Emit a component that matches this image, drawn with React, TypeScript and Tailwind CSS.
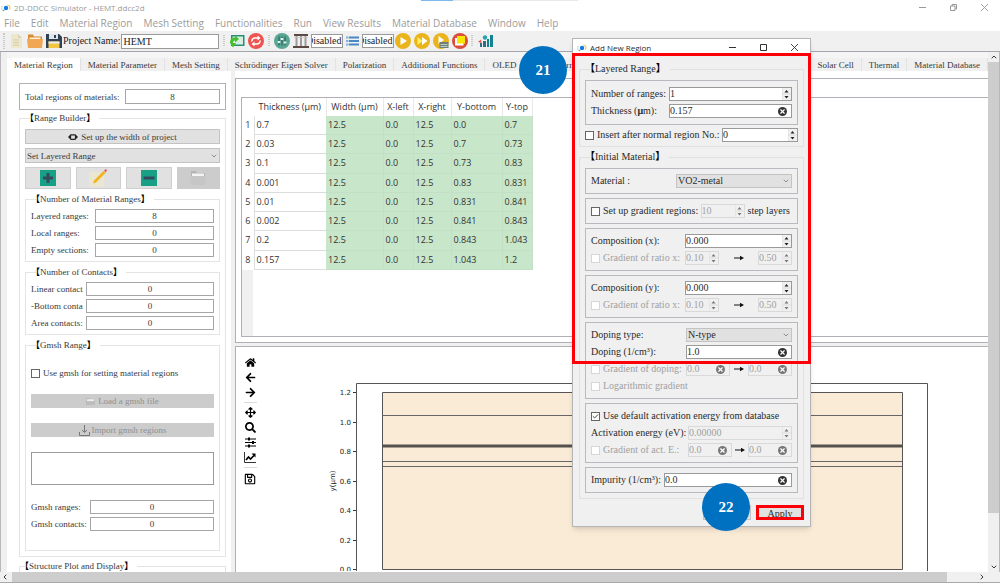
import { useState, type ReactNode } from "react";
import { ChevronDown, ChevronUp, ChevronLeft, ChevronRight, Check, X } from "lucide-react";
import { FaHome, FaArrowLeft, FaArrowRight, FaArrowsAlt, FaSearch, FaRegSave } from "react-icons/fa";

const MENUS = ["File", "Edit", "Material Region", "Mesh Setting", "Functionalities", "Run", "View Results", "Material Database", "Window", "Help"];
const TABS = ["Material Region", "Material Parameter", "Mesh Setting", "Schrödinger Eigen Solver", "Polarization", "Additional Functions", "OLED"];
const RIGHT_TABS = ["Solar Cell", "Thermal", "Material Database"];

const COLUMNS = ["Thickness (μm)", "Width (μm)", "X-left", "X-right", "Y-bottom", "Y-top"];
const ROWS = [
  ["0.7", "12.5", "0.0", "12.5", "0.0", "0.7"],
  ["0.03", "12.5", "0.0", "12.5", "0.7", "0.73"],
  ["0.1", "12.5", "0.0", "12.5", "0.73", "0.83"],
  ["0.001", "12.5", "0.0", "12.5", "0.83", "0.831"],
  ["0.01", "12.5", "0.0", "12.5", "0.831", "0.841"],
  ["0.002", "12.5", "0.0", "12.5", "0.841", "0.843"],
  ["0.2", "12.5", "0.0", "12.5", "0.843", "1.043"],
  ["0.157", "12.5", "0.0", "12.5", "1.043", "1.2"],
];

function Logo() {
  return (
    <svg viewBox="0 0 20 16" className="h-2 w-[10px] shrink-0">
      <path d="M3 4C0 8 1 13 6 13" fill="none" stroke="#9fd3ef" strokeWidth="2" />
      <path d="M12 2c5 0 7 4 5 9" fill="none" stroke="#f2c94c" strokeWidth="2.4" />
      <circle cx="10" cy="8" r="4.4" fill="#1479e0" />
      <circle cx="5" cy="13" r="1.6" fill="#8fa34a" />
    </svg>
  );
}

function Legend({ children }: { children: ReactNode }) {
  return (
    <legend className="ml-[5px] h-3 pr-1 leading-3 whitespace-nowrap">
      <b className="-ml-[5px] text-black">【</b>
      {children}
      <b className="text-black">】</b>
    </legend>
  );
}

function Tick({ id, label, checked = false, disabled = false }: { id: string; label: string; checked?: boolean; disabled?: boolean }) {
  const [on, setOn] = useState(checked);
  return (
    <span className={`flex items-center gap-[3px] whitespace-nowrap ${disabled ? "text-[#a0a0a0]" : ""}`}>
      <span className="grid size-[9px] shrink-0 place-items-center">
        <input
          id={id}
          type="checkbox"
          checked={on}
          disabled={disabled}
          onChange={(e) => setOn(e.target.checked)}
          className="col-start-1 row-start-1 size-[9px] appearance-none border border-[#666] bg-white disabled:border-[#d6d6d6]"
        />
        {on && <Check className="pointer-events-none col-start-1 row-start-1 size-[7px] text-[#222]" strokeWidth={3} />}
      </span>
      <label htmlFor={id}>{label}</label>
    </span>
  );
}

function CountRow({ id, label, value, labelClass }: { id: string; label: string; value: string; labelClass: string }) {
  return (
    <div className="flex items-center">
      <label htmlFor={id} className={`shrink-0 overflow-hidden whitespace-nowrap ${labelClass}`}>
        {label}
      </label>
      <input id={id} defaultValue={value} className="h-[14px] w-0 min-w-0 flex-1 border border-[#a6a6a6] bg-white text-center" />
    </div>
  );
}

function Spin({ id, label, value, disabled = false, className }: { id: string; label?: string; value: string; disabled?: boolean; className: string }) {
  return (
    <div className={`flex h-[14px] border ${disabled ? "border-[#d9d9d9] bg-[#f0f0f0] text-[#a0a0a0]" : "border-[#9a9a9a] bg-white"} ${className}`}>
      <input id={id} aria-label={label} defaultValue={value} disabled={disabled} className="w-0 min-w-0 flex-1" />
      <button type="button" aria-label="Step value" disabled={disabled} className="flex w-[9px] flex-col items-center justify-center bg-[#f0f0f0]">
        <svg viewBox="0 0 9 12" className="h-3 w-[9px]">
          <path d="M2.500 4.500L4.500 2l2 2.500zM2.500 8L4.500 10.500l2-2.500z" fill={disabled ? "#777" : "#222"} />
          <path d="M0 6h9M0 0v12" stroke="#dcdcdc" strokeWidth="1" />
        </svg>
      </button>
    </div>
  );
}

function Clearable({ id, label, value, disabled = false, className }: { id: string; label?: string; value: string; disabled?: boolean; className: string }) {
  return (
    <div className={`flex h-[14px] items-center border pr-1 ${disabled ? "border-[#d9d9d9] text-[#a0a0a0]" : "border-[#9a9a9a] bg-white"} ${className}`}>
      <input id={id} aria-label={label} defaultValue={value} disabled={disabled} className="w-0 min-w-0 flex-1" />
      <button
        type="button"
        aria-label="Clear"
        disabled={disabled}
        className="grid size-[9px] shrink-0 place-items-center rounded-full bg-[#333] text-white disabled:bg-[#777]"
      >
        <X className="size-[7px]" strokeWidth={4} />
      </button>
    </div>
  );
}

function Drop({ id, label, value, className }: { id: string; label?: string; value: string; className: string }) {
  return (
    <div className={`grid items-center ${className}`}>
      <select
        id={id}
        aria-label={label}
        className="col-start-1 row-start-1 h-full w-full appearance-none border border-[#c3c3c3] bg-[#e1e1e1] pl-px"
      >
        <option>{value}</option>
      </select>
      <ChevronDown className="pointer-events-none col-start-1 row-start-1 mr-[2px] size-2 justify-self-end text-[#666]" />
    </div>
  );
}

function Box({ children }: { children: ReactNode }) {
  return <div className="flex flex-col gap-[3px] border border-[#b9b9bf] px-[5px] py-[5px]">{children}</div>;
}

function Row({ children }: { children: ReactNode }) {
  return <div className="flex h-[14px] items-center justify-between whitespace-nowrap">{children}</div>;
}

function Arrow() {
  return (
    <svg viewBox="0 0 10 6" className="h-[6px] w-[10px] shrink-0">
      <path d="M0 3h7" stroke="#111" strokeWidth="1" />
      <path d="M6 .8L10 3 6 5.200z" fill="#111" />
    </svg>
  );
}

function TitleBar() {
  return (
    <header className="flex h-[15px] shrink-0 items-center gap-[3px] pl-px font-['Open_Sans','Noto_Sans',sans-serif] text-[8px] text-[#9b9b9b]">
      <Logo />
      <h1>2D-DDCC Simulator - HEMT.ddcc2d</h1>
      <div className="ml-auto flex items-center gap-6 pr-3 text-[#999]">
        <button type="button" aria-label="Minimize">
          <svg viewBox="0 0 7 7" className="size-[7px]"><path d="M0 3.500h7" stroke="currentColor" /></svg>
        </button>
        <button type="button" aria-label="Restore">
          <svg viewBox="0 0 7 7" className="size-[7px]"><path d="M.5 2h4.500v4.500H.5zM2 2V.5h4.500V5H5" fill="none" stroke="currentColor" /></svg>
        </button>
        <button type="button" aria-label="Close">
          <svg viewBox="0 0 7 7" className="size-[7px]"><path d="M0 0l7 7M7 0L0 7" stroke="currentColor" strokeWidth=".9" /></svg>
        </button>
      </div>
    </header>
  );
}

function Handle() {
  return <span className="h-4 w-[2px] shrink-0 border-x border-dotted border-[#c9c9c9]" />;
}

function ToolBar() {
  return (
    <div className="flex h-[21px] shrink-0 items-center border-b border-[#a5a5ad] bg-[#f0f0f0] pl-[3px] text-[10px] text-[#222]">
      <Handle />
      <button type="button" aria-label="New" className="ml-[3px]">
        <svg viewBox="0 0 16 16" className="size-4"><path d="M3 1h7l4 4v10H3z" fill="#ece7cd" /><path d="M10 1v4h4" fill="#dcd5b0" /><path d="M5 7h6M5 9.500h6M5 12h6" stroke="#d6cfa9" /></svg>
      </button>
      <button type="button" aria-label="Open" className="ml-[3px]">
        <svg viewBox="0 0 16 16" className="size-4"><path d="M1 1.500h5l1 2h8V15H1z" fill="#d98a2f" /><path d="M2.500 4.500h11v3h-11z" fill="#fff3e0" /><path d="M0 6h16l-1 9H1z" fill="#f0a653" /></svg>
      </button>
      <button type="button" aria-label="Save" className="ml-[3px]">
        <svg viewBox="0 0 16 16" className="size-4"><path d="M0 1h13l3 3v11H0z" fill="#2f4152" /><path d="M3 1h9v5H3z" fill="#dfe5ea" /><path d="M8 2h2v3H8z" fill="#2f4152" /><path d="M2.500 8.500h11V15h-11z" fill="#f4c542" /><path d="M2.500 8.500h11v2h-11z" fill="#e8eef0" /></svg>
      </button>
      <label htmlFor="project" className="ml-px whitespace-nowrap">Project Name:</label>
      <input id="project" defaultValue="HEMT" className="ml-px h-[15px] w-[98px] border border-[#9a9a9a] bg-white px-px" />
      <span className="ml-[4px]"><Handle /></span>
      <button type="button" aria-label="Refresh structure" className="ml-[4px]">
        <svg viewBox="0 0 16 16" className="size-4"><path d="M2 2h13.500v11H2z" fill="#2a8d72" /><path d="M3.500 3.500h10.500v8H3.500z" fill="#d9efe4" /><path d="M1 10c0-4 2-5.500 5-5.500V2.500L10 6 6 9.500v-2c-1.500 0-2 1-2 2.500h3l-3 4.500z" fill="#45c02e" /></svg>
      </button>
      <button type="button" aria-label="Reload" className="ml-[3px]">
        <svg viewBox="0 0 16 16" className="size-4"><circle cx="8" cy="8" r="8" fill="#ee5350" /><path d="M4 8.500a3 3 0 013-3.500h3M12 7.500a3 3 0 01-3 3.500H6" fill="none" stroke="#fff" strokeWidth="1.500" /><path d="M9.500 2.500L12.500 5l-3 2.500zM6.500 13.500L3.500 11l3-2.500z" fill="#fff" /></svg>
      </button>
      <span className="ml-[4px]"><Handle /></span>
      <button type="button" aria-label="Settings" className="ml-[4px]">
        <svg viewBox="0 0 16 16" className="size-4"><circle cx="8" cy="8" r="8" fill="#5aa694" /><path d="M5 3.500v9M8 3.500v9M11 3.500v9" stroke="#24594f" /><path d="M3.700 9h2.600M6.700 6h2.600M9.700 9.500h2.600" stroke="#e4f4f0" strokeWidth="1.800" /></svg>
      </button>
      <button type="button" aria-label="Mesh" className="ml-[3px]">
        <svg viewBox="0 0 16 16" className="size-4"><path d="M1 2h14M0 14h16" stroke="#5b4a44" strokeWidth="2" /><path d="M3.500 3v10M8 3v10M12.500 3v10" stroke="#a09a9a" strokeWidth="2" /><path d="M1 4.500h14" stroke="#c9c4c4" strokeWidth=".8" /></svg>
      </button>
      <div className="ml-[2px] flex h-[14px] w-8 items-center justify-end overflow-hidden border border-[#9a9a9a] bg-white pr-px">Disabled</div>
      <button type="button" aria-label="Layer list" className="ml-[3px]">
        <svg viewBox="0 0 13 14" className="h-[14px] w-[13px]"><path d="M0 3.500h2.500M0 7h2.500M0 10.500h2.500" stroke="#7fb2de" strokeWidth="2" /><path d="M3 3.500h10M3 7h10M3 10.500h10" stroke="#4a88c5" strokeWidth="2" /></svg>
      </button>
      <div className="ml-[3px] flex h-[14px] w-8 items-center justify-end overflow-hidden border border-[#9a9a9a] bg-white pr-px">Disabled</div>
      <button type="button" aria-label="Run" className="ml-px">
        <svg viewBox="0 0 16 16" className="size-4"><circle cx="8" cy="8" r="8" fill="#eab41c" /><path d="M5.500 4l6.500 4-6.500 4z" fill="#fff" /></svg>
      </button>
      <button type="button" aria-label="Run all" className="ml-[3px]">
        <svg viewBox="0 0 16 16" className="size-4"><circle cx="8" cy="8" r="8" fill="#eab41c" /><path d="M3.500 4L8.500 8l-5 4z" fill="#fff35a" /><path d="M8 4l5.500 4L8 12z" fill="#fff" /></svg>
      </button>
      <button type="button" aria-label="Run with output" className="ml-[3px]">
        <svg viewBox="0 0 16 16" className="size-4"><circle cx="8" cy="8" r="8" fill="#eab41c" /><path d="M5.500 3l5.500 4-5.500 4z" fill="#fff" /><path d="M6.500 9h9v6h-9z" fill="#6f7f7a" /><path d="M7.500 11.500h7M7.500 13.500h7" stroke="#cfe0da" strokeWidth=".8" /></svg>
      </button>
      <button type="button" aria-label="Stop" className="ml-[3px]">
        <svg viewBox="0 0 16 16" className="size-4"><circle cx="8" cy="8" r="8" fill="#db4c3c" /><path d="M3 5h8.500v7.500H3z" fill="#fff" /><path d="M5 3h8v7.500H5z" fill="#f7e600" /></svg>
      </button>
      <span className="ml-[3px]"><Handle /></span>
      <button type="button" aria-label="Plot results" className="ml-[5px]">
        <svg viewBox="0 0 16 16" className="size-4"><path d="M5 8h3v6H5z" fill="#2c6f86" /><path d="M2 10h2v4H2z" fill="#2c6f86" /><path d="M9 6h2v8H9zM12 2h3v12h-3z" fill="#15838f" /><circle cx="7" cy="4.500" r="2.200" fill="#2aa3ad" /><path d="M0 9l3-2.500L3.500 10z" fill="#e2574c" /></svg>
      </button>
    </div>
  );
}

function Tab({ children, active = false }: { children: ReactNode; active?: boolean }) {
  return (
    <button
      type="button"
      role="tab"
      aria-selected={active}
      className={`h-[13px] shrink-0 overflow-hidden border-r border-[#e2e2e2] px-[7px] leading-3 whitespace-nowrap ${active ? "bg-white" : "bg-[#f0f0f0]"}`}
    >
      {children}
    </button>
  );
}

function SidePanel() {
  const iconButton = "grid h-[22px] flex-1 place-items-center border border-[#cfcfcf] bg-[#e1e1e1]";
  return (
    <aside className="flex w-[228px] shrink-0 flex-col overflow-hidden border-r-4 border-[#f0f0f0] pt-3 pr-[5px] pl-3">
      <div className="flex shrink-0 items-center justify-between border border-[#b0b0b6] p-[5px]">
        <label htmlFor="total">Total regions of materials:</label>
        <input id="total" defaultValue="8" className="h-[15px] w-[95px] border border-[#a6a6a6] bg-white text-center" />
      </div>

      <fieldset className="mt-[2px] min-w-0 shrink-0 border border-[#e4e4e4] px-[5px] pb-[5px]">
        <Legend>Range Builder</Legend>
        <div className="flex flex-col gap-1 pt-[5px]">
          <button type="button" className="flex h-[15px] items-center justify-center gap-[3px] border border-[#c3c3c3] bg-[#e1e1e1]">
            <svg viewBox="0 0 20 12" className="h-[6px] w-[10px]"><rect x="5" y="1.500" width="10" height="9" rx="1" fill="none" stroke="#222" strokeWidth="2.500" /><path d="M4 2L0 6l4 4zM16 2l4 4-4 4z" fill="#222" /></svg>
            Set up the width of project
          </button>
          <Drop id="mode" label="Range mode" value="Set Layered Range" className="h-[15px]" />
          <div className="flex gap-[5px]">
            <button type="button" aria-label="Add range" className={iconButton}>
              <svg viewBox="0 0 16 16" className="size-4"><path d="M0 0h16v16H0z" fill="#17a085" /><path d="M6.500 3h3v3.500H13v3H9.500V13h-3V9.500H3v-3h3.500z" fill="#344a5e" /></svg>
            </button>
            <button type="button" aria-label="Edit range" className={iconButton}>
              <svg viewBox="0 0 18 18" className="size-[18px]"><path d="M0 3h15v15H0z" fill="#ebe6cf" /><path d="M4 14.500l1-3L14.500 2 16.500 4 7 13.500z" fill="#f0b41f" /><path d="M15 1.500L17 0l1 1.500-1.500 2z" fill="#ee5350" /></svg>
            </button>
            <button type="button" aria-label="Remove range" className={iconButton}>
              <svg viewBox="0 0 16 16" className="size-4"><path d="M0 0h16v16H0z" fill="#17a085" /><path d="M2.500 6.500h11v3h-11z" fill="#344a5e" /></svg>
            </button>
            <button type="button" aria-label="Open range file" disabled className="grid h-[22px] flex-1 place-items-center bg-[#cccccc]">
              <svg viewBox="0 0 16 16" className="size-4"><path d="M1 1h5l1 2h8v11H1z" fill="#b5b5b5" /><path d="M2 3.500h12v3H2z" fill="#f4f4f4" /><path d="M0 6h16l-1 9H1z" fill="#c6c6c6" /></svg>
            </button>
          </div>

          <fieldset className="min-w-0 border border-[#e4e4e4] px-[5px] pb-1">
            <Legend>Number of Material Ranges</Legend>
            <div className="flex flex-col gap-[3px] pt-1">
              <CountRow id="layered" label="Layered ranges:" value="8" labelClass="w-16" />
              <CountRow id="local" label="Local ranges:" value="0" labelClass="w-16" />
              <CountRow id="empty" label="Empty sections:" value="0" labelClass="w-16" />
            </div>
          </fieldset>

          <fieldset className="min-w-0 border border-[#e4e4e4] px-[5px] pb-1">
            <Legend>Number of Contacts</Legend>
            <div className="flex flex-col gap-[3px] pt-1">
              <CountRow id="linear" label="Linear contact" value="0" labelClass="w-[55px]" />
              <CountRow id="bottom" label="-Bottom conta" value="0" labelClass="w-[55px]" />
              <CountRow id="area" label="Area contacts:" value="0" labelClass="w-[55px]" />
            </div>
          </fieldset>

          <fieldset className="min-w-0 border border-[#e4e4e4] px-[5px] pb-[19px]">
            <Legend>Gmsh Range</Legend>
            <div className="flex flex-col gap-[15px] pt-4">
              <Tick id="gmsh" label="Use gmsh for setting material regions" />
              <button type="button" disabled className="flex h-[14px] items-center justify-center gap-[3px] bg-[#cccccc] text-[#8f8f8f]">
                <svg viewBox="0 0 10 10" className="size-[9px]"><path d="M0 1h4l1 1h5v7H0z" fill="#bdbdbd" /><path d="M1 2.500h8v2H1z" fill="#efefef" /></svg>
                Load a gmsh file
              </button>
              <button type="button" disabled className="flex h-[14px] items-center justify-center gap-[2px] bg-[#cccccc] text-[#8f8f8f]">
                <svg viewBox="0 0 11 11" className="size-[11px]"><path d="M5.500 0v7M3 5l2.500 2.500L8 5M.5 7v3.500h10V7" fill="none" stroke="#777" /></svg>
                Import gmsh regions
              </button>
              <textarea aria-label="Gmsh log" className="h-[33px] resize-none border border-[#9a9a9a] bg-white" />
              <div className="flex flex-col gap-[3px]">
                <CountRow id="gr" label="Gmsh ranges:" value="0" labelClass="w-[59px]" />
                <CountRow id="gc" label="Gmsh contacts:" value="0" labelClass="w-[59px]" />
              </div>
            </div>
          </fieldset>
        </div>
      </fieldset>

      <fieldset className="mt-[3px] min-w-0 shrink-0 border border-[#e4e4e4]">
        <Legend>Structure Plot and Display</Legend>
        <div className="h-10" />
      </fieldset>
    </aside>
  );
}

function LayerTable() {
  return (
    <table className="h-[172px] w-[290px] table-fixed border-collapse self-start font-['Open_Sans','Noto_Sans',sans-serif] text-[9px] text-[#333]">
      <colgroup>
        <col className="w-[12px]" />
        <col className="w-[72px]" />
        <col className="w-[57px]" />
        <col className="w-[30px]" />
        <col className="w-[38px]" />
        <col className="w-[51px]" />
        <col className="w-[30px]" />
      </colgroup>
      <thead>
        <tr className="h-[18px]">
          <th className="p-0" aria-label="Row" />
          {COLUMNS.map((c) => (
            <th key={c} scope="col" className="border-r border-[#e8e8e8] p-0 text-center font-normal whitespace-nowrap">
              {c}
            </th>
          ))}
        </tr>
      </thead>
      <tbody>
        {ROWS.map((r, i) => (
          <tr key={i}>
            <th scope="row" className="border-r border-[#e0e0e0] p-0 text-center font-normal">
              {i + 1}
            </th>
            {r.map((v, j) => (
              <td
                key={j}
                className={`p-0 pl-[2px] ${j === 0 ? "border-b border-[#dcdcdc]" : "border-r border-b border-[#c3dfc5] bg-[#c8e6c9]"}`}
              >
                {v}
              </td>
            ))}
          </tr>
        ))}
      </tbody>
    </table>
  );
}

const TICKS = [
  { v: "1.2", y: 45 },
  { v: "1.0", y: 75 },
  { v: "0.8", y: 104 },
  { v: "0.6", y: 134 },
  { v: "0.4", y: 163 },
  { v: "0.2", y: 193 },
  { v: "0.0", y: 222 },
];

function PlotToolBar() {
  const rule = "h-px w-[13px] bg-[#dcdcdc]";
  return (
    <div className="flex w-7 shrink-0 flex-col items-center gap-[4px] pt-[10px] text-[11px] text-black">
      <button type="button" aria-label="Home"><FaHome /></button>
      <button type="button" aria-label="Back"><FaArrowLeft /></button>
      <button type="button" aria-label="Forward"><FaArrowRight /></button>
      <span className={rule} />
      <button type="button" aria-label="Pan"><FaArrowsAlt /></button>
      <button type="button" aria-label="Zoom"><FaSearch /></button>
      <button type="button" aria-label="Configure subplots">
        <svg viewBox="0 0 11 11" className="size-[11px]"><path d="M0 2h11M0 5.500h11M0 9h11" stroke="#000" /><path d="M4 .5v3M8 4v3M4 7.500v3" stroke="#000" strokeWidth="2" /></svg>
      </button>
      <button type="button" aria-label="Edit axes">
        <svg viewBox="0 0 12 11" className="h-[11px] w-3"><path d="M.5 0v10.500H12" fill="none" stroke="#333" /><path d="M2 8l2.500-3 2 2L10 3.500" fill="none" stroke="#000" strokeWidth="1.700" /><path d="M7.500 1.500h4v4z" fill="#000" /></svg>
      </button>
      <span className={rule} />
      <button type="button" aria-label="Save figure" className="pt-px text-[12px]"><FaRegSave /></button>
    </div>
  );
}

function Plot() {
  return (
    <svg viewBox="0 0 600 224" className="mr-[60px] h-[224px] min-w-0 flex-1 self-start font-['DejaVu_Sans',sans-serif]" preserveAspectRatio="xMaxYMin meet" fontSize="7" fill="#222">
      <path d="M28.500 240V36.500h571V240" fill="none" stroke="#555" />
      <path d="M54.500 45.500h520v177h-520z" fill="#faebd7" stroke="#555" />
      <path d="M54.500 68.500h520M54.500 114.500h520M54.500 119.500h520" stroke="#666" />
      <path d="M54.500 99h520" stroke="#55524d" strokeWidth="3" />
      {TICKS.map((t) => (
        <g key={t.v}>
          <path d={`M25 ${t.y + 0.5}h3`} stroke="#333" />
          <text x="23" y={t.y + 3} textAnchor="end">{t.v}</text>
        </g>
      ))}
      <text x="7" y="134" textAnchor="middle" transform="rotate(-90 7 134)">y(μm)</text>
    </svg>
  );
}

function GradientRow({ id }: { id: string }) {
  return (
    <Row>
      <Tick id={id} label="Gradient of ratio x:" disabled />
      <div className="flex w-[107px] items-center justify-between">
        <Spin id={`${id}-from`} label="Ratio start" value="0.10" disabled className="w-[34px]" />
        <Arrow />
        <Spin id={`${id}-to`} label="Ratio end" value="0.50" disabled className="w-[34px]" />
      </div>
    </Row>
  );
}

function RegionDialog() {
  return (
    <section
      role="dialog"
      aria-label="Add New Region"
      className="absolute top-[38px] left-[572px] w-[239px] border border-[#b5b5b5] bg-[#f0f0f0] text-[10px] text-[#2b2b2b] shadow-md"
    >
      <header className="flex h-[17px] items-center gap-[3px] bg-white pl-1 font-['Open_Sans','Noto_Sans',sans-serif] text-[8px]">
        <Logo />
        <h2>Add New Region</h2>
        <div className="ml-auto flex items-center gap-6 pr-3">
          <button type="button" aria-label="Minimize dialog">
            <svg viewBox="0 0 7 7" className="size-[7px]"><path d="M0 3.500h7" stroke="#333" /></svg>
          </button>
          <button type="button" aria-label="Maximize dialog">
            <svg viewBox="0 0 7 7" className="size-[7px]"><path d="M.5.5h6v6h-6z" fill="none" stroke="#333" /></svg>
          </button>
          <button type="button" aria-label="Close dialog">
            <svg viewBox="0 0 7 7" className="size-[7px]"><path d="M0 0l7 7M7 0L0 7" stroke="#333" strokeWidth=".9" /></svg>
          </button>
        </div>
      </header>

      <div className="flex flex-col px-[6px] pt-[7px] pb-[6px]">
        <fieldset className="min-w-0 border border-[#e0e0e0] px-[5px] pb-1">
          <Legend>Layered Range</Legend>
          <div className="flex flex-col gap-[3px] pt-[5px]">
            <div className="flex flex-col gap-[3px] border border-[#b9b9bf] px-[5px] py-[6px]">
              <Row>
                <label htmlFor="num">Number of ranges:</label>
                <Spin id="num" value="1" className="w-[123px]" />
              </Row>
              <Row>
                <label htmlFor="thick">Thickness (<b>μ</b>m):</label>
                <Clearable id="thick" value="0.157" className="w-[123px]" />
              </Row>
            </div>
            <Row>
              <Tick id="insert" label="Insert after normal region No.:" />
              <Spin id="insert-at" label="Region number" value="0" className="w-[76px]" />
            </Row>
          </div>
        </fieldset>

        <fieldset className="mt-1 min-w-0 border border-[#e0e0e0] px-[5px] pb-[5px]">
          <Legend>Initial Material</Legend>
          <div className="flex flex-col gap-1 pt-[5px]">
            <Box>
              <Row>
                <label htmlFor="material">Material :</label>
                <Drop id="material" value="VO2-metal" className="h-[14px] w-[116px]" />
              </Row>
            </Box>
            <Box>
              <Row>
                <Tick id="grad" label="Set up gradient regions:" />
                <Spin id="steps" label="Step layers" value="10" disabled className="ml-auto w-11" />
                <span className="mr-[2px] ml-[3px]">step layers</span>
              </Row>
            </Box>
            <Box>
              <Row>
                <label htmlFor="cx">Composition (x):</label>
                <Spin id="cx" value="0.000" className="w-[107px]" />
              </Row>
              <GradientRow id="gx" />
            </Box>
            <Box>
              <Row>
                <label htmlFor="cy">Composition (y):</label>
                <Spin id="cy" value="0.000" className="w-[107px]" />
              </Row>
              <GradientRow id="gy" />
            </Box>
            <Box>
              <Row>
                <label htmlFor="dtype">Doping type:</label>
                <Drop id="dtype" value="N-type" className="h-[14px] w-[106px]" />
              </Row>
              <Row>
                <label htmlFor="doping">Doping (1/cm³):</label>
                <Clearable id="doping" value="1.0" className="w-[106px]" />
              </Row>
              <Row>
                <Tick id="gd" label="Gradient of doping:" disabled />
                <div className="flex w-[106px] items-center justify-between">
                  <Clearable id="gd-from" label="Doping start" value="0.0" disabled className="w-11" />
                  <Arrow />
                  <Clearable id="gd-to" label="Doping end" value="0.0" disabled className="w-11" />
                </div>
              </Row>
              <Row>
                <Tick id="log" label="Logarithmic gradient" disabled />
              </Row>
            </Box>
            <Box>
              <Row>
                <Tick id="act" label="Use default activation energy from database" checked />
              </Row>
              <Row>
                <label htmlFor="energy">Activation energy (eV):</label>
                <Spin id="energy" value="0.00000" disabled className="w-[104px]" />
              </Row>
              <Row>
                <Tick id="ga" label="Gradient of act. E.:" disabled />
                <div className="flex w-[104px] items-center justify-between">
                  <Clearable id="ga-from" label="Energy start" value="0.0" disabled className="w-11" />
                  <Arrow />
                  <Clearable id="ga-to" label="Energy end" value="0.0" disabled className="w-11" />
                </div>
              </Row>
            </Box>
            <Box>
              <Row>
                <label htmlFor="imp">Impurity (1/cm³):</label>
                <Clearable id="imp" value="0.0" className="w-32" />
              </Row>
            </Box>
          </div>
        </fieldset>

        <div className="mt-[6px] flex justify-end gap-[5px]">
          <button type="button" className="h-[15px] w-12 border border-[#c3c3c3] bg-[#e1e1e1]">Cancel</button>
          <button type="button" className="h-[15px] w-12 overflow-hidden border-[3px] border-[#fb0007] bg-[#e1e1e1] leading-3">Apply</button>
        </div>
      </div>

      <div className="pointer-events-none absolute -inset-x-px top-[14px] h-[311px] border-[3px] border-[#fb0007]" />
    </section>
  );
}

function Callout({ n, className }: { n: string; className: string }) {
  return (
    <div className={`absolute grid size-12 place-items-center rounded-full bg-[#0070c0] text-[15px] font-bold text-white ${className}`}>{n}</div>
  );
}

export default function App() {
  return (
    <div className="relative flex h-screen flex-col overflow-hidden bg-white font-['Liberation_Serif','Noto_Sans_CJK_TC',serif] text-[9px] leading-3 text-[#3a3a3a]">
      <div className="absolute top-0 left-[421px] flex h-px w-[157px] bg-[#e8e8e8]">
        <span className="w-8 bg-[#7db9ee]" />
      </div>
      <TitleBar />
      <nav className="flex h-4 shrink-0 items-center gap-[11px] pl-1 font-['Open_Sans','Noto_Sans',sans-serif] text-[10px] text-[#9b9b9b]">
        {MENUS.map((m) => (
          <button key={m} type="button" className="whitespace-nowrap">{m}</button>
        ))}
      </nav>
      <ToolBar />

      <div className="flex min-h-0 flex-1">
        <main className="flex min-w-0 flex-1 flex-col border-l border-[#b8b8bd] bg-[#f0f0f0] pl-[6px]">
          <div role="tablist" className="flex shrink-0 bg-[#f5f5f5] pt-[6px]">
            {TABS.map((t, i) => (
              <Tab key={t} active={i === 0}>{t}</Tab>
            ))}
            <Tab>Optical Array</Tab>
            <span className="h-[13px] flex-1 bg-[#f0f0f0]" />
            {RIGHT_TABS.map((t) => (
              <Tab key={t}>{t}</Tab>
            ))}
          </div>
          <div className="flex min-h-0 flex-1 bg-white">
            <SidePanel />
            <div className="flex min-w-0 flex-1 flex-col gap-[3px] bg-[#f0f0f0]">
              <div className="shrink-0 bg-white pt-[7px]">
                <div className="border-y border-l border-[#b0b0b6] pt-[18px] pb-[5px] pl-[5px]">
                  <div className="flex h-[240px] flex-col border-y border-l border-[#b0b0b6]">
                    <LayerTable />
                    <div className="w-[11px] flex-1 bg-[#f0f0f0]" />
                  </div>
                </div>
              </div>
              <div className="flex min-h-0 flex-1 overflow-hidden border-t border-l border-[#b0b0b6] bg-white">
                <PlotToolBar />
                <Plot />
              </div>
            </div>
          </div>
        </main>
        <div className="flex w-[12px] shrink-0 flex-col items-center border-r border-[#b8b8b8] bg-[#f0f0f0]">
          <button type="button" aria-label="Scroll up" className="h-[10px]"><ChevronUp className="size-2" strokeWidth={3} /></button>
          <div className="w-full flex-[450] bg-[#cdcdcd]" />
          <div className="flex-[49]" />
          <button type="button" aria-label="Scroll down" className="h-[10px]"><ChevronDown className="size-2" strokeWidth={3} /></button>
        </div>
      </div>
      <div className="flex h-[11px] shrink-0 items-center border-b border-[#a8a8a8] bg-[#f0f0f0]">
        <button type="button" aria-label="Scroll left" className="w-3 pl-px"><ChevronLeft className="size-2" strokeWidth={3} /></button>
        <div className="h-full flex-[935] bg-[#cdcdcd]" />
        <div className="flex-[31]" />
        <button type="button" aria-label="Scroll right" className="w-[22px]"><ChevronRight className="size-2" strokeWidth={3} /></button>
      </div>

      <RegionDialog />
      <Callout n="21" className="top-[46px] left-[519px]" />
      <Callout n="22" className="top-[483px] left-[702px]" />
    </div>
  );
}
